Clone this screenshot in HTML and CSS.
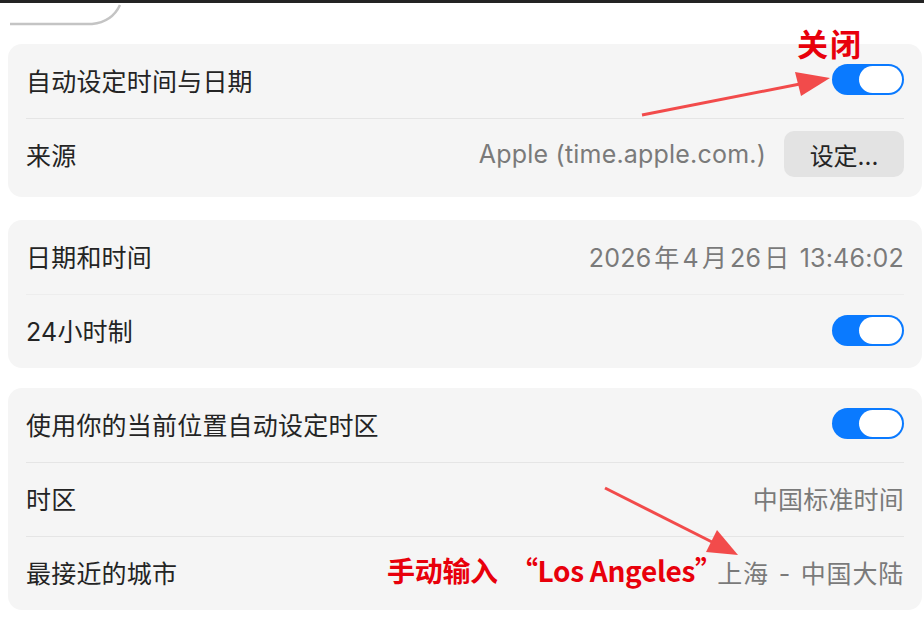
FILE: index.html
```html
<!DOCTYPE html>
<html lang="zh-CN">
<head>
<meta charset="UTF-8" />
<meta name="viewport" content="width=device-width, initial-scale=1" />
<title>日期与时间</title>
<link rel="stylesheet" href="styles.css">
</head>
<body>

<div class="topbar"></div>

<svg class="field-edge" width="130" height="30" viewBox="0 0 130 30">
  <path d="M10 24 L92 24 Q112 22 120 5" fill="none" stroke="#c4c4c4" stroke-width="2.5" />
</svg>

<div class="page">
  <div class="card first">
    <div class="row">
      <span class="label">自动设定时间与日期</span>
      <span class="toggle"><span class="knob"></span></span>
    </div>
    <div class="row">
      <span class="label">来源</span>
      <span class="right">
        <span class="value">Apple (time.apple.com.)</span>
        <span class="btn">设定...</span>
      </span>
    </div>
  </div>

  <div class="card">
    <div class="row">
      <span class="label">日期和时间</span>
      <span class="value">2026<span class="cj">年</span>4<span class="cj">月</span>26<span class="cj">日</span> 13:46:02</span>
    </div>
    <div class="row nodiv">
      <span class="label">24小时制</span>
      <span class="toggle"><span class="knob"></span></span>
    </div>
  </div>

  <div class="card">
    <div class="row">
      <span class="label">使用你的当前位置自动设定时区</span>
      <span class="toggle"><span class="knob"></span></span>
    </div>
    <div class="row">
      <span class="label">时区</span>
      <span class="value">中国标准时间</span>
    </div>
    <div class="row">
      <span class="label">最接近的城市</span>
      <span class="value city">上海 - 中国大陆</span>
    </div>
  </div>
</div>

<!-- annotations drawn over the screenshot -->
<div class="note note-off">关闭</div>
<div class="note note-city">手动输入 &nbsp;“Los Angeles”</div>
<svg class="arrows" width="924" height="618" viewBox="0 0 924 618">
  <line x1="642" y1="115" x2="800" y2="84" stroke="#f24b4b" stroke-width="3" />
  <polygon points="830,78 795,72 801,96" fill="#f24b4b" />
  <line x1="605" y1="488" x2="712" y2="542" stroke="#f24b4b" stroke-width="3" />
  <polygon points="738,555 717,530 706,552" fill="#f24b4b" />
</svg>

</body>
</html>
```

FILE: styles.css
```css
body {
  margin: 0;
  background: #fff;
  color: #242424;
  font-family: Inter, "Noto Sans CJK SC", sans-serif;
  width: 924px;
  height: 618px;
  overflow: hidden;
  position: relative;
}
.topbar {
  height: 3px;
  background: #232323;
}
.field-edge {
  position: absolute;
  left: 0;
  top: 0;
}
.page {
  padding: 41px 2px 0 8px;
}
.card {
  background: #f5f5f5;
  border-radius: 14px;
  padding: 0 18px;
  margin-bottom: 20px;
}
.card.first {
  padding-bottom: 5px;
  margin-bottom: 23px;
}
.row {
  height: 74px;
  display: flex;
  align-items: center;
  justify-content: space-between;
  border-top: 1px solid #e5e5e5;
  box-sizing: border-box;
  padding-bottom: 3px;
}
.row:first-child {
  border-top: none;
}
.row.nodiv {
  border-top-color: #ededed;
}
.label {
  font-size: 25px;
  letter-spacing: 0.2px;
}
.value {
  font-size: 25px;
  color: #7a7a7a;
  letter-spacing: 0.2px;
}
.value.city {
  word-spacing: 2px;
  letter-spacing: 0.8px;
}
.cj {
  margin: 0 3px;
}
.right {
  display: flex;
  align-items: center;
  gap: 18px;
}
.btn {
  width: 120px;
  height: 46px;
  border-radius: 10px;
  background: #e3e3e3;
  font-size: 24px;
  display: flex;
  align-items: center;
  justify-content: center;
}
.toggle {
  width: 72px;
  height: 31px;
  border-radius: 16px;
  background: #0a7aff;
  display: flex;
  align-items: center;
  justify-content: flex-end;
  padding: 0 2px;
  box-sizing: border-box;
}
.knob {
  width: 43px;
  height: 27px;
  border-radius: 14px;
  background: #fff;
}
.note {
  position: absolute;
  color: #e8000b;
  font-family: "Noto Sans CJK SC", sans-serif;
  font-weight: bold;
  white-space: nowrap;
}
.note-off {
  left: 797px;
  top: 20px;
  font-size: 31px;
  letter-spacing: 2px;
}
.note-city {
  left: 387px;
  top: 550px;
  font-size: 28px;
  letter-spacing: -0.3px;
}
.arrows {
  position: absolute;
  left: 0;
  top: 0;
  pointer-events: none;
}
```
